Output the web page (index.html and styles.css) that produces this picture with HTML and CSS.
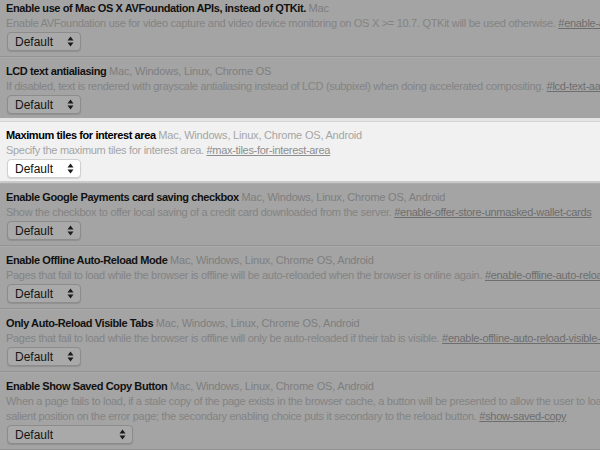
FILE: index.html
```html
<!DOCTYPE html>
<html lang="en">
<head>
  <meta charset="UTF-8" />
  <title>Flags</title>
  <link rel="stylesheet" href="styles.css">
</head>
<body>
  <div class="flag-list">
    <div class="flag">
      <div class="flag-title">Enable use of Mac OS X AVFoundation APIs, instead of QTKit. <span class="platforms">Mac</span></div>
      <div class="flag-desc">Enable AVFoundation use for video capture and video device monitoring on OS X &gt;= 10.7. QTKit will be used otherwise. <a href="#">#enable-avfoundation</a></div>
      <div class="select"><span>Default</span><svg width="7" height="11" viewBox="0 0 7 11"><path d="M3.5 0.5 L6.5 4.5 L0.5 4.5 Z M3.5 10.5 L6.5 6.5 L0.5 6.5 Z"/></svg></div>
    </div>
    <div class="flag">
      <div class="flag-title">LCD text antialiasing <span class="platforms">Mac, Windows, Linux, Chrome OS</span></div>
      <div class="flag-desc">If disabled, text is rendered with grayscale antialiasing instead of LCD (subpixel) when doing accelerated compositing. <a href="#">#lcd-text-aa</a></div>
      <div class="select"><span>Default</span><svg width="7" height="11" viewBox="0 0 7 11"><path d="M3.5 0.5 L6.5 4.5 L0.5 4.5 Z M3.5 10.5 L6.5 6.5 L0.5 6.5 Z"/></svg></div>
    </div>
    <div class="flag referenced">
      <div class="flag-title">Maximum tiles for interest area <span class="platforms">Mac, Windows, Linux, Chrome OS, Android</span></div>
      <div class="flag-desc">Specify the maximum tiles for interest area. <a href="#">#max-tiles-for-interest-area</a></div>
      <div class="select"><span>Default</span><svg width="7" height="11" viewBox="0 0 7 11"><path d="M3.5 0.5 L6.5 4.5 L0.5 4.5 Z M3.5 10.5 L6.5 6.5 L0.5 6.5 Z"/></svg></div>
    </div>
    <div class="flag">
      <div class="flag-title">Enable Google Payments card saving checkbox <span class="platforms">Mac, Windows, Linux, Chrome OS, Android</span></div>
      <div class="flag-desc">Show the checkbox to offer local saving of a credit card downloaded from the server. <a href="#">#enable-offer-store-unmasked-wallet-cards</a></div>
      <div class="select"><span>Default</span><svg width="7" height="11" viewBox="0 0 7 11"><path d="M3.5 0.5 L6.5 4.5 L0.5 4.5 Z M3.5 10.5 L6.5 6.5 L0.5 6.5 Z"/></svg></div>
    </div>
    <div class="flag">
      <div class="flag-title">Enable Offline Auto-Reload Mode <span class="platforms">Mac, Windows, Linux, Chrome OS, Android</span></div>
      <div class="flag-desc">Pages that fail to load while the browser is offline will be auto-reloaded when the browser is online again. <a href="#">#enable-offline-auto-reload</a></div>
      <div class="select"><span>Default</span><svg width="7" height="11" viewBox="0 0 7 11"><path d="M3.5 0.5 L6.5 4.5 L0.5 4.5 Z M3.5 10.5 L6.5 6.5 L0.5 6.5 Z"/></svg></div>
    </div>
    <div class="flag">
      <div class="flag-title">Only Auto-Reload Visible Tabs <span class="platforms">Mac, Windows, Linux, Chrome OS, Android</span></div>
      <div class="flag-desc">Pages that fail to load while the browser is offline will only be auto-reloaded if their tab is visible. <a href="#">#enable-offline-auto-reload-visible-only</a></div>
      <div class="select"><span>Default</span><svg width="7" height="11" viewBox="0 0 7 11"><path d="M3.5 0.5 L6.5 4.5 L0.5 4.5 Z M3.5 10.5 L6.5 6.5 L0.5 6.5 Z"/></svg></div>
    </div>
    <div class="flag last">
      <div class="flag-title">Enable Show Saved Copy Button <span class="platforms">Mac, Windows, Linux, Chrome OS, Android</span></div>
      <div class="flag-desc">When a page fails to load, if a stale copy of the page exists in the browser cache, a button will be presented to allow the user to load that stale copy. The primary enabling choice puts the button in the most<br>salient position on the error page; the secondary enabling choice puts it secondary to the reload button. <a href="#">#show-saved-copy</a></div>
      <div class="select wide"><span>Default</span><svg width="7" height="11" viewBox="0 0 7 11"><path d="M3.5 0.5 L6.5 4.5 L0.5 4.5 Z M3.5 10.5 L6.5 6.5 L0.5 6.5 Z"/></svg></div>
    </div>
  </div>
</body>
</html>
```

FILE: styles.css
```css
body {
  margin: 0;
  background-color: #a4a4a4;
  font-family: "Liberation Sans", Arial, sans-serif;
  font-size: 11px;
  overflow: hidden;
}
.flag-list {
  margin-top: -6px;
}
.flag {
  padding: 7px 6px 5px;
  border-bottom: 1px solid #939393;
  box-shadow: inset 0 1px 0 #ababab;
  height: 50px;
}
.flag-title {
  color: #111;
  font-weight: bold;
  line-height: 15px;
  letter-spacing: -0.4px;
  white-space: nowrap;
}
.platforms {
  color: #7e7e7e;
  font-weight: normal;
  letter-spacing: -0.2px;
}
.flag-desc {
  color: #838383;
  line-height: 15px;
  letter-spacing: -0.3px;
  white-space: nowrap;
}
.flag-desc a {
  color: #6e6e6e;
  text-decoration: underline;
}
.select {
  display: flex;
  align-items: center;
  justify-content: space-between;
  box-sizing: border-box;
  width: 74px;
  height: 19px;
  margin-top: 1px;
  margin-left: 1px;
  padding: 0 6px 0 7px;
  border: 1px solid #8c8c8c;
  border-radius: 4px;
  background-color: #a9a9a9;
  box-shadow: 0 1px 1px rgba(0, 0, 0, 0.12);
  color: #151515;
  font-size: 12px;
}
.select svg path {
  fill: #1a1a1a;
}
.select.wide {
  width: 126px;
}
.flag.last {
  height: 65px;
}
.referenced {
  background-color: #f1f1f1;
  border-top: 3px solid #e4e4e4;
  border-bottom: 2px solid #c9c9c9;
  box-shadow: inset 0 1px 0 #d4d4d4;
  height: 48px;
  margin-top: -2px;
}
.referenced .flag-title {
  color: #000;
}
.referenced .platforms,
.referenced .flag-desc {
  color: #a5a5a5;
}
.referenced .flag-desc a {
  color: #8e8e8e;
}
.referenced .select {
  background-color: #fff;
  border-color: #cfcfcf;
  color: #111;
}
```
